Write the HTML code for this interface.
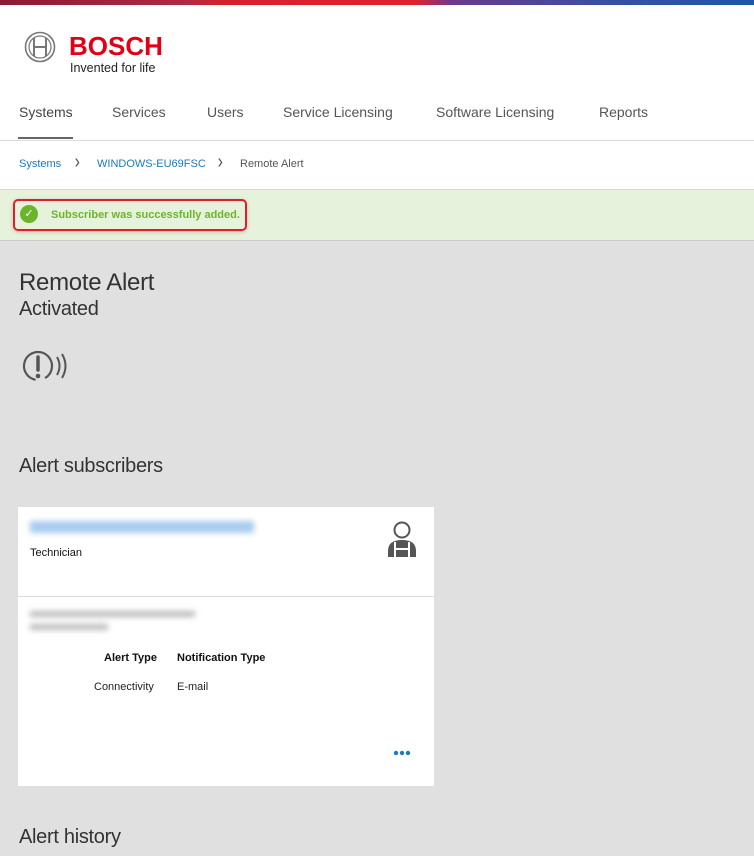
<!DOCTYPE html>
<html><head><meta charset="utf-8"><style>
*{margin:0;padding:0;box-sizing:border-box}
body{width:754px;height:856px;overflow:hidden;background:#e0e0e0;font-family:"Liberation Sans",sans-serif;position:relative}
.a{position:absolute;white-space:nowrap}
#hdr{position:absolute;left:0;top:0;width:754px;height:189px;background:#fff}
#bar{position:absolute;left:0;top:0;width:754px;height:5px;background:linear-gradient(90deg,#8c1a33 0,#b02944 25%,#d8202d 30%,#e0222c 55%,#6a3a8e 60%,#3b4fa0 80%,#1b58a8 100%)}
.nav{font-size:14px;color:#555;top:104px}
.chev{font-size:20px;color:#555;top:151px;transform:scaleX(.8)}
#msg{position:absolute;left:0;top:189px;width:754px;height:52px;background:#e7f2dc;border-top:1px solid #d6dcd2;border-bottom:1px solid #c8cec4}
.blur{filter:blur(3px)}
.h{color:#333;letter-spacing:-0.3px}
</style></head><body>
<div id="hdr">
<div id="bar"></div>
<svg class="a" style="left:24px;top:31px" width="32" height="32" viewBox="0 0 32 32"><circle cx="16" cy="16" r="14.5" fill="none" stroke="#777" stroke-width="1.6"/><circle cx="16" cy="16" r="11" fill="none" stroke="#777" stroke-width="1.2"/><path d="M10 7v18M22 7v18M10 16h12" stroke="#777" stroke-width="2" fill="none"/></svg>
<div class="a" style="left:69px;top:31px;font-size:26px;font-weight:bold;color:#e20015">BOSCH</div>
<div class="a" style="left:70px;top:61px;font-size:12.5px;color:#222">Invented for life</div>
<div class="a nav" style="left:19px;color:#444">Systems</div>
<div class="a" style="left:18px;top:137px;width:55px;height:2px;background:#666"></div>
<div class="a nav" style="left:112px">Services</div>
<div class="a nav" style="left:207px">Users</div>
<div class="a nav" style="left:283px">Service Licensing</div>
<div class="a nav" style="left:436px">Software Licensing</div>
<div class="a nav" style="left:599px">Reports</div>
<div class="a" style="left:0;top:140px;width:754px;height:1px;background:#ddd"></div>
<div class="a" style="left:19px;top:158px;font-size:11px;color:#1a7bbf">Systems</div>
<div class="a chev" style="left:74px">&#x203A;</div>
<div class="a" style="left:97px;top:158px;font-size:11px;color:#1a7bbf">WINDOWS-EU69FSC</div>
<div class="a chev" style="left:217px">&#x203A;</div>
<div class="a" style="left:240px;top:158px;font-size:11px;color:#555">Remote Alert</div>
</div>
<div id="msg">
<div class="a" style="left:13px;top:9px;width:234px;height:32px;border:2px solid #e01e2a;border-radius:5px;box-shadow:0 1px 4px rgba(0,0,0,.2)"></div>
<div class="a" style="left:20px;top:15px;width:18px;height:18px;border-radius:50%;background:#6bb52c;color:#fff;font-size:11px;text-align:center;line-height:18px">&#10003;</div>
<div class="a" style="left:51px;top:19px;font-size:11px;font-weight:bold;color:#6bb52c">Subscriber was successfully added.</div>
</div>
<div class="a h" style="left:19px;top:269px;font-size:24px">Remote Alert</div>
<div class="a h" style="left:19px;top:298px;font-size:20px">Activated</div>
<svg class="a" style="left:21px;top:349px" width="50" height="36" viewBox="0 0 50 36"><circle cx="17" cy="17" r="14" fill="none" stroke="#555" stroke-width="2.2" stroke-dasharray="78 10" transform="rotate(100 17 17)"/><path d="M17 8v13" stroke="#555" stroke-width="3.5" stroke-linecap="round"/><circle cx="17" cy="27" r="2.3" fill="#555"/><path d="M36 8q5 9 0 18M41 5q7 12 0 24" stroke="#555" stroke-width="2" fill="none"/></svg>
<div class="a h" style="left:19px;top:455px;font-size:20px">Alert subscribers</div>
<div class="a" style="left:18px;top:507px;width:416px;height:279px;background:#fff">
<div class="a blur" style="left:12px;top:14px;width:224px;height:12px;background:#a8cbef"></div>
<div class="a" style="left:12px;top:40px;font-size:11px;color:#111">Technician</div>
<svg class="a" style="left:368px;top:14px" width="32" height="38" viewBox="0 0 32 38"><circle cx="16" cy="9" r="7.5" fill="none" stroke="#555" stroke-width="2"/><path d="M2 36v-6q0-11 14-11t14 11v6z" fill="#555"/><path d="M9 21v15M23 21v15" stroke="#fff" stroke-width="2"/><path d="M10 28h12" stroke="#fff" stroke-width="2"/></svg>
<div class="a" style="left:0;top:89px;width:416px;height:1px;background:#ddd"></div>
<div class="a blur" style="left:12px;top:104px;width:165px;height:6px;background:#bbb"></div>
<div class="a blur" style="left:12px;top:117px;width:78px;height:6px;background:#bbb"></div>
<div class="a" style="left:86px;top:145px;font-size:11px;font-weight:bold;color:#111">Alert Type</div>
<div class="a" style="left:159px;top:145px;font-size:11px;font-weight:bold;color:#111">Notification Type</div>
<div class="a" style="left:76px;top:174px;font-size:11px;color:#222">Connectivity</div>
<div class="a" style="left:159px;top:174px;font-size:11px;color:#222">E-mail</div>
<svg class="a" style="left:375px;top:243px" width="18" height="6" viewBox="0 0 18 6"><circle cx="3" cy="3" r="2.2" fill="#1a7bbf"/><circle cx="9" cy="3" r="2.2" fill="#1a7bbf"/><circle cx="15" cy="3" r="2.2" fill="#1a7bbf"/></svg>
</div>
<div class="a h" style="left:19px;top:826px;font-size:20px">Alert history</div>
</body></html>
